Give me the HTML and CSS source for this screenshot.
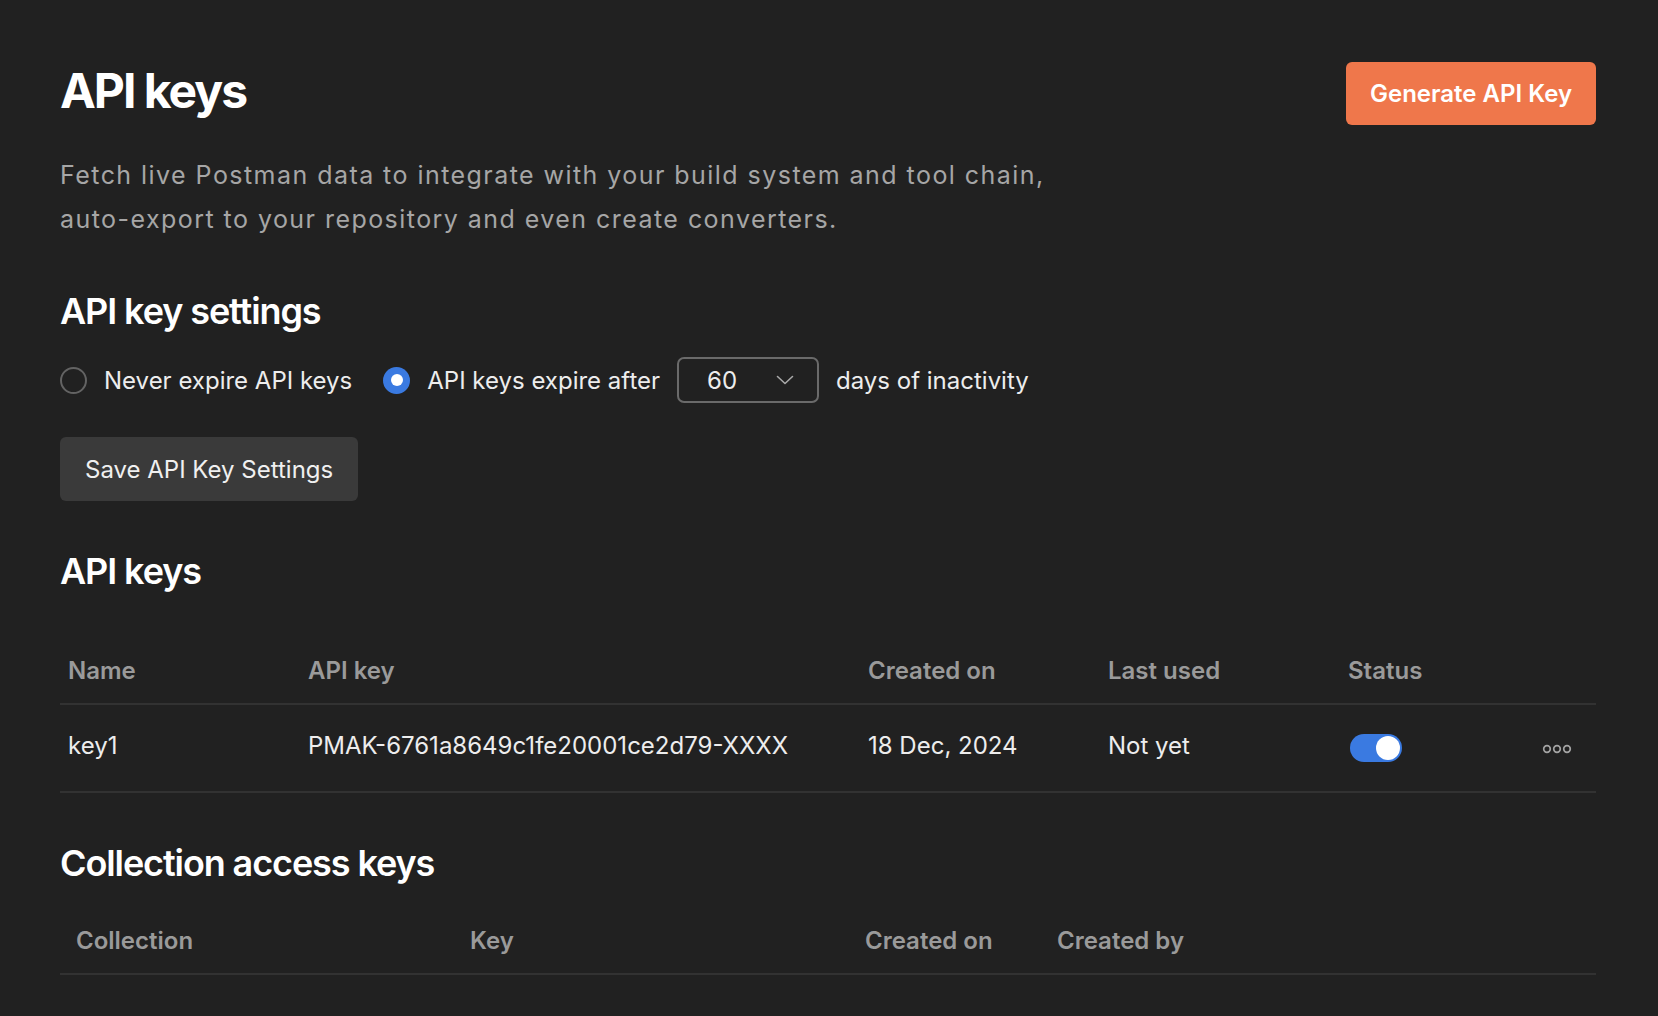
FILE: index.html
```html
<!DOCTYPE html>
<html lang="en">
<head>
<meta charset="utf-8">
<title>API keys</title>
<link rel="stylesheet" href="styles.css">
</head>
<body>
<main class="page">
  <header class="page-header">
    <h1 class="title">API keys</h1>
    <button class="btn-primary" type="button">Generate API Key</button>
  </header>
  <p class="description">Fetch live Postman data to integrate with your build system and tool chain, auto-export to your repository and even create converters.</p>

  <h2 class="section-title section-settings">API key settings</h2>
  <div class="options">
    <label class="option">
      <span class="radio"></span>
      <span class="option-label">Never expire API keys</span>
    </label>
    <div class="option">
      <span class="radio radio-checked"><span class="radio-dot"></span></span>
      <span class="option-label">API keys expire after</span>
      <div class="select">
        <span class="select-value">60</span>
        <svg class="chevron" width="18" height="10" viewBox="0 0 18 10"><path d="M1.5 1.5 L9 8.5 L16.5 1.5" fill="none" stroke="#a9a9a9" stroke-width="1.6" stroke-linecap="round" stroke-linejoin="round"/></svg>
      </div>
      <span class="option-label">days of inactivity</span>
    </div>
  </div>
  <button class="btn-secondary" type="button">Save API Key Settings</button>

  <h2 class="section-title section-keys">API keys</h2>
  <table class="table table-keys">
    <colgroup>
      <col class="c-240"><col class="c-560"><col class="c-240"><col class="c-240"><col class="c-160"><col>
    </colgroup>
    <thead>
      <tr><th>Name</th><th>API key</th><th>Created on</th><th>Last used</th><th>Status</th><th></th></tr>
    </thead>
    <tbody>
      <tr>
        <td class="txt">key1</td>
        <td class="txt">PMAK-6761a8649c1fe20001ce2d79-XXXX</td>
        <td class="txt">18 Dec, 2024</td>
        <td class="txt">Not yet</td>
        <td><span class="toggle"><span class="toggle-knob"></span></span></td>
        <td class="actions"><svg width="30" height="10" viewBox="0 0 30 10"><circle cx="5" cy="5" r="3.3" fill="none" stroke="#a3a3a3" stroke-width="1.7"/><circle cx="15" cy="5" r="3.3" fill="none" stroke="#a3a3a3" stroke-width="1.7"/><circle cx="25" cy="5" r="3.3" fill="none" stroke="#a3a3a3" stroke-width="1.7"/></svg></td>
      </tr>
    </tbody>
  </table>

  <h2 class="section-title section-collection">Collection access keys</h2>
  <table class="table table-collection">
    <colgroup>
      <col class="c-394"><col class="c-395"><col class="c-192"><col>
    </colgroup>
    <thead>
      <tr><th>Collection</th><th>Key</th><th>Created on</th><th>Created by</th></tr>
    </thead>
  </table>
</main>
</body>
</html>
```

FILE: styles.css
```css
* { box-sizing: border-box; }

html, body {
  margin: 0;
  background: #212121;
}

body {
  font-family: "Inter", "Noto Sans", "Liberation Sans", sans-serif;
  color: #ededed;
  min-height: 1016px;
}

.page {
  padding: 62px 62px 0 60px;
}

.page-header {
  display: flex;
  justify-content: space-between;
  align-items: flex-start;
}

.title {
  margin: 0;
  font-size: 48px;
  line-height: 58px;
  font-weight: 700;
  color: #ffffff;
  letter-spacing: -2px;
}

.btn-primary {
  height: 63px;
  padding: 0 24px;
  border: 0;
  border-radius: 6px;
  background: #ef774b;
  color: #ffffff;
  font-family: inherit;
  font-size: 24px;
  font-weight: 600;
}

.description {
  margin: 28px 0 0;
  max-width: 1010px;
  font-size: 25px;
  line-height: 44px;
  letter-spacing: 1.45px;
  color: #a6a6a6;
}

.section-title {
  margin: 0;
  font-size: 36px;
  line-height: 44px;
  font-weight: 600;
  color: #ffffff;
  letter-spacing: -1.1px;
}

.section-settings { margin-top: 48px; }
.section-keys { margin-top: 48px; }
.section-collection { margin-top: 48px; }

.options {
  margin-top: 24px;
  height: 46px;
  display: flex;
  align-items: center;
  gap: 31px;
}

.option {
  display: flex;
  align-items: center;
  gap: 17px;
  font-size: 24px;
  color: #ededed;
}

.radio {
  width: 27px;
  height: 27px;
  border-radius: 50%;
  border: 2px solid #636363;
  display: flex;
  align-items: center;
  justify-content: center;
  flex: none;
}

.radio-checked {
  border: 0;
  background: #3a7ae1;
}

.radio-dot {
  width: 12px;
  height: 12px;
  border-radius: 50%;
  background: #ffffff;
}

.select {
  width: 142px;
  height: 46px;
  border: 2px solid #6a6a6a;
  border-radius: 7px;
  display: flex;
  align-items: center;
  justify-content: space-between;
  padding: 0 23px 0 28px;
}

.select-value {
  font-size: 24px;
  color: #ededed;
}

.chevron { display: block; }

.btn-secondary {
  display: block;
  margin-top: 34px;
  height: 64px;
  padding: 0 25px;
  border: 0;
  border-radius: 6px;
  background: #3a3a3a;
  color: #f0f0f0;
  font-family: inherit;
  font-size: 24px;
  font-weight: 400;
}

.table {
  width: 100%;
  table-layout: fixed;
  border-collapse: separate;
  border-spacing: 0;
}

.table-keys { margin-top: 47px; }
.table-collection { margin-top: 24px; }

.c-240 { width: 240px; }
.c-560 { width: 560px; }
.c-160 { width: 160px; }
.c-394 { width: 394px; }
.c-395 { width: 395px; }
.c-192 { width: 192px; }

.table th {
  text-align: left;
  padding: 15px 8px 16px;
  font-size: 24px;
  line-height: 32px;
  font-weight: 600;
  color: #9a9a9a;
  border-bottom: 2px solid #323232;
}

.table-collection th {
  padding: 16px 16px 16px;
}

.table td {
  height: 88px;
  padding: 0 8px;
  font-size: 24px;
  line-height: 32px;
  color: #ededed;
  vertical-align: middle;
  border-bottom: 2px solid #323232;
}

.table td.txt {
  padding-bottom: 5px;
}

.table td.actions {
  text-align: right;
  padding-right: 24px;
}

.actions svg { display: inline-block; vertical-align: middle; }

.toggle {
  width: 52px;
  height: 28px;
  border-radius: 14px;
  background: #3a7ae1;
  display: flex;
  align-items: center;
  justify-content: flex-end;
  padding-right: 2px;
  margin-left: 2px;
}

.toggle-knob {
  width: 24px;
  height: 24px;
  border-radius: 50%;
  background: #ffffff;
}
```
